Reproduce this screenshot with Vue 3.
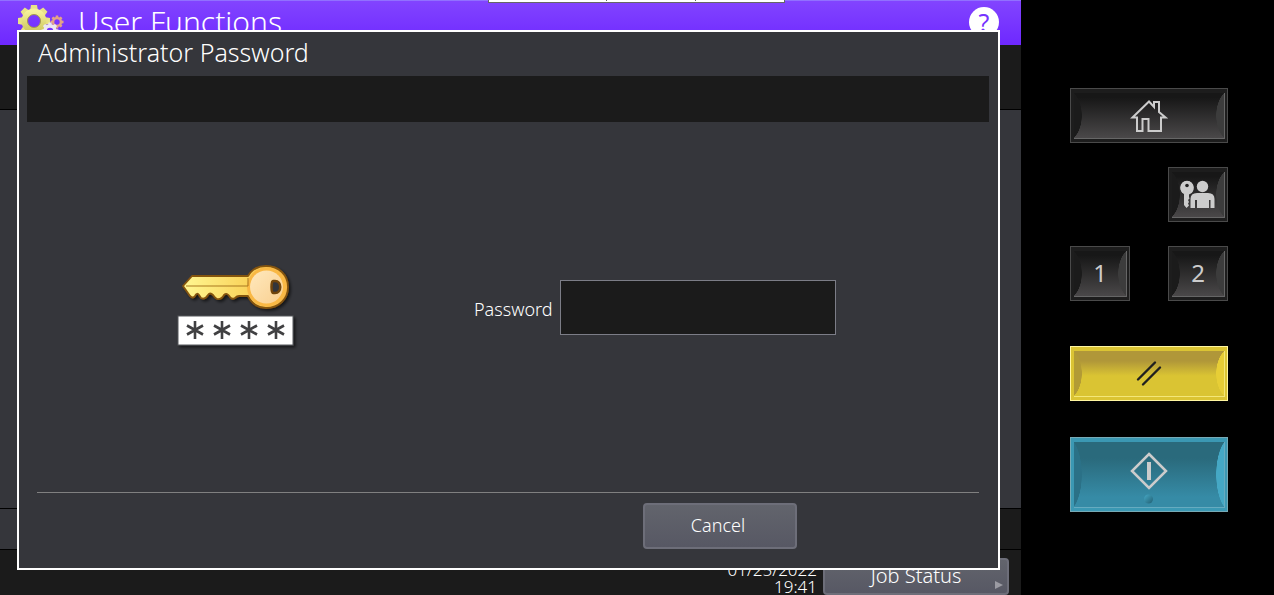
<script setup>
import { ref } from 'vue'

const password = ref('')
const toothAngles = [0, 45, 90, 135, 180, 225, 270, 315]
const stars = [22, 49, 76, 103]
</script>

<template>
  <div class="device">
    <div class="screen">
      <header class="topbar">
        <svg class="gears" viewBox="0 0 48 36" aria-hidden="true">
          <defs>
            <linearGradient id="gearFill" x1="0" y1="0" x2="0" y2="1">
              <stop offset="0" stop-color="#f6f19a" />
              <stop offset="1" stop-color="#cfca62" />
            </linearGradient>
          </defs>
          <g transform="translate(17 17)">
            <g fill="#e9e387">
              <path v-for="a in toothAngles" :key="a" :transform="`rotate(${a})`" d="M-4 -10L-3 -16H3L4 -10Z" />
            </g>
            <circle r="9.5" fill="none" stroke="url(#gearFill)" stroke-width="6" />
            <circle r="6.5" fill="none" stroke="#a39a4c" stroke-width="1" />
          </g>
          <g transform="translate(40 18)">
            <g fill="#e3a387">
              <path v-for="a in toothAngles" :key="a" :transform="`rotate(${a})`" d="M-1.5 -4L-1.2 -6.5H1.2L1.5 -4Z" />
            </g>
            <circle r="3.9" fill="none" stroke="#e3a387" stroke-width="2.4" />
          </g>
          <g transform="translate(33 27)">
            <g fill="#ece9f2">
              <path v-for="a in toothAngles" :key="a" :transform="`rotate(${a})`" d="M-2 -5L-1.5 -8.5H1.5L2 -5Z" />
            </g>
            <circle r="5" fill="none" stroke="#ece9f2" stroke-width="3.5" />
          </g>
        </svg>
        <h1>User Functions</h1>
        <button class="help" type="button" aria-label="Help">?</button>
        <div class="tab" aria-hidden="true"><i></i><i></i><i></i></div>
      </header>
      <div class="strip"></div>
      <main class="workspace"></main>
      <div class="lower"><div class="lower-panel"></div></div>
      <footer class="statusbar">
        <div class="clock">
          <div>01/25/2022</div>
          <div>19:41</div>
        </div>
        <button class="btn job" type="button">Job Status
          <svg class="arrow" viewBox="0 0 8 8" aria-hidden="true"><path d="M0 0L8 4L0 8Z" fill="#9b9ba3" /></svg>
        </button>
      </footer>

      <section class="dialog" role="dialog" aria-labelledby="dialog-title">
        <h2 id="dialog-title">Administrator Password</h2>
        <div class="message"></div>
        <form class="content" @submit.prevent>
          <svg class="key-art" viewBox="0 0 130 92" aria-hidden="true">
            <defs>
              <linearGradient id="blade" x1="0" y1="0" x2="1" y2="0">
                <stop offset="0" stop-color="#fff792" />
                <stop offset="0.6" stop-color="#fad45c" />
                <stop offset="1" stop-color="#f6b545" />
              </linearGradient>
              <linearGradient id="bow" x1="0" y1="0" x2="1" y2="1">
                <stop offset="0" stop-color="#ffe9bd" />
                <stop offset="1" stop-color="#f9cf90" />
              </linearGradient>
              <filter id="shade" x="-10%" y="-10%" width="125%" height="135%">
                <feDropShadow dx="2" dy="2" stdDeviation="1.5" flood-color="#000" flood-opacity="0.6" />
              </filter>
            </defs>
            <g filter="url(#shade)" stroke="#855411" stroke-width="1.8" stroke-linejoin="round">
              <path d="M11 25L20 15H76C80 8 86 5 94 5C107 5 116 14 116 26C116 38 107 47 94 47C86 47 80 43 76 35H67Q65 35 63 37Q60 39 58 36Q55 31 52 34Q49 39 45 38Q43 37 41 34Q38 31 36 34Q33 39 29 37L27 34Q25 31 23 35Q21 38 18 35Z" fill="url(#blade)" />
              <circle cx="94.500" cy="26" r="19.500" fill="#f9b844" stroke="none" />
              <circle cx="94.500" cy="26" r="16.500" fill="url(#bow)" stroke="none" />
              <path d="M14 25H76V17" fill="none" stroke="#a97820" stroke-width="1" />
              <path d="M101 20H103C110 20 110 32 103 32H101C99 32 99 20 101 20Z" fill="#33343a" stroke="#704509" stroke-width="2.5" />
            </g>
            <rect x="6" y="55" width="115" height="29" fill="#fff" stroke="#55565a" filter="url(#shade)" />
            <g stroke="#404042" stroke-width="2.6">
              <path v-for="x in stars" :key="x" :transform="`translate(${x + 1} 69)`" d="M0 -9V9M-8 -4.500L8 4.500M-8 4.500L8 -4.500" />
            </g>
          </svg>
          <div class="field">
            <label for="password">Password</label>
            <input id="password" v-model="password" type="password" autocomplete="off" />
          </div>
        </form>
        <div class="actions">
          <button class="btn cancel" type="button">Cancel</button>
        </div>
      </section>
    </div>

    <aside class="panel">
      <button class="key wide" type="button" aria-label="Home">
        <svg viewBox="0 0 38 34" aria-hidden="true">
          <path d="M2.500 18.500L19 2.500L24 8V3H29V13L35.500 18.500H31V32H18.500V20H12.500V32H7V18.500Z" fill="none" stroke="#ccc" stroke-width="2" />
        </svg>
      </button>
      <button class="key right" type="button" aria-label="Login">
        <svg viewBox="0 0 38 34" aria-hidden="true">
          <g fill="#ccc">
            <path fill-rule="evenodd" d="M8 3A7 7 0 0 0 5 16V27L7.500 30L10 27.500L9 25.500L10 24L9 22L10.500 20.500L10 19V16.500A7 7 0 0 0 8 3ZM7.500 5.800A2 2 0 1 1 7.400 5.800Z" />
            <circle cx="8" cy="9.500" r="6.700" />
            <circle cx="23.500" cy="8.500" r="5.700" />
            <path d="M18 15H29Q35.500 15 35.500 21V30H31.500V22H30V30H18V22H16V30H11.500V21Q11.500 15 18 15Z" />
          </g>
          <circle cx="8" cy="7.500" r="1.800" fill="#222" />
        </svg>
      </button>
      <button class="key one" type="button"><span>1</span></button>
      <button class="key two" type="button"><span>2</span></button>
      <button class="key wide reset" type="button" aria-label="Reset">
        <svg viewBox="0 0 38 34" aria-hidden="true">
          <path d="M8 22.500L25 5.500M13 27.500L30 10.500" stroke="#202020" stroke-width="2.4" stroke-linecap="round" />
        </svg>
      </button>
      <button class="key wide start" type="button" aria-label="Start">
        <svg viewBox="0 0 38 54" aria-hidden="true">
          <defs>
            <linearGradient id="lamp" x1="0" y1="0" x2="1" y2="1">
              <stop offset="0" stop-color="#46a9c6" />
              <stop offset="1" stop-color="#225f72" />
            </linearGradient>
          </defs>
          <path d="M19 2L36 19L19 36L2 19Z" fill="none" stroke="#ccc" stroke-width="2.5" />
          <path d="M19 10V28" stroke="#ccc" stroke-width="4" />
          <circle cx="18.500" cy="47" r="4.500" fill="url(#lamp)" />
        </svg>
      </button>
    </aside>
  </div>
</template>

<style>
body {
  background: #000;
}
</style>

<style scoped>
* {
  box-sizing: border-box;
}
.device {
  display: grid;
  grid-template-columns: minmax(0, 1fr) 253px;
  min-height: 100vh;
  background: #000;
  color: #fff;
  font-family: "Noto Sans", "Open Sans", sans-serif;
  font-weight: 300;
}
button,
input {
  font: inherit;
  color: inherit;
  margin: 0;
}
h1,
h2 {
  margin: 0;
  font-weight: 300;
}
.screen {
  position: relative;
  display: flex;
  flex-direction: column;
  background: #1b1b1b;
  overflow: hidden;
}
.topbar {
  position: relative;
  display: flex;
  align-items: center;
  height: 45px;
  padding: 0 22px 2px 17px;
  border-top: 1px solid #9170ff;
  background: linear-gradient(#8244ff, #6e28ff);
}
.gears {
  width: 48px;
  height: 36px;
}
.topbar h1 {
  flex: 1;
  margin-left: 13px;
  font-size: 30px;
  line-height: 40px;
}
.help {
  width: 30px;
  height: 30px;
  padding: 0;
  border: 0;
  border-radius: 50%;
  background: #fff;
  color: #7634ff;
  font-size: 25px;
  font-weight: 400;
  line-height: 28px;
}
.tab {
  position: absolute;
  top: -1px;
  left: 488px;
  display: grid;
  grid-template-columns: 117px 89px 89px;
  width: 297px;
  height: 3px;
  border: 1px solid #666;
  border-top: 0;
  background: #fff;
}
.tab i + i {
  height: 1px;
  border-left: 1px solid #666;
}
.strip {
  height: 64px;
}
.workspace {
  flex: 1;
  border-top: 1px solid #000;
  background: #35363b;
}
.lower {
  height: 41px;
  padding-right: 40px;
  border-top: 1px solid #000;
}
.lower-panel {
  height: 40px;
  background: #35363b;
}
.statusbar {
  display: flex;
  justify-content: flex-end;
  align-items: flex-end;
  gap: 6px;
  height: 46px;
  padding-right: 12px;
  border-top: 1px solid #000;
}
.clock {
  text-align: right;
  font-size: 17px;
  line-height: 17px;
}
.btn {
  position: relative;
  padding: 0;
  border: 2px solid #6d6e79;
  border-radius: 4px;
  background: linear-gradient(#62646c, #575864);
  font-size: 18px;
}
.job {
  width: 186px;
  height: 37px;
  padding-bottom: 2px;
  font-size: 20px;
  line-height: 28px;
}
.arrow {
  position: absolute;
  right: 4px;
  bottom: 4px;
  width: 8px;
  height: 8px;
}
.dialog {
  position: absolute;
  inset: 30px 21px 25px 17px;
  display: flex;
  flex-direction: column;
  border: 2px solid #fff;
  background: #35363b;
}
.dialog h2 {
  height: 44px;
  padding-left: 19px;
  font-size: 25px;
  line-height: 41px;
}
.message {
  height: 46px;
  margin: 0 9px 0 8px;
  background: #1b1b1b;
}
.content {
  flex: 1;
  display: grid;
  grid-template-columns: 455fr 524fr;
  align-items: center;
}
.key-art {
  justify-self: center;
  width: 130px;
  height: 92px;
  margin-right: 20px;
}
.field {
  display: flex;
  align-items: center;
}
.field label {
  width: 86px;
  padding-top: 4px;
  font-size: 18px;
}
.field input {
  width: 276px;
  height: 55px;
  padding: 0 12px;
  border: 1px solid #7c7d87;
  border-radius: 0;
  background: #1b1b1b;
  outline: 0;
}
.actions {
  display: flex;
  justify-content: flex-end;
  margin: 0 19px 0 18px;
  padding: 10px 182px 19px 0;
  border-top: 1px solid #808080;
}
.cancel {
  width: 154px;
  height: 46px;
  padding: 0 4px 2px 0;
}
.panel {
  display: grid;
  grid-template-columns: 60px 60px;
  grid-template-rows: 55px 55px 55px 76px 87px;
  justify-content: space-between;
  align-content: start;
  align-items: end;
  row-gap: 24px;
  padding: 88px 46px 0 49px;
}
.key {
  --frame: #1d1d1d;
  --edge: #4a4a4a;
  --rim: #666;
  --left: #1b1b1b;
  --right: #3c3c3c;
  --face: linear-gradient(#171717 10%, #4a4849);
  position: relative;
  display: grid;
  place-items: center;
  height: 55px;
  padding: 0;
  border: 1px solid var(--edge);
  background: var(--frame);
  color: #ccc;
  font-size: 24px;
  font-weight: 400;
}
.key::before,
.key::after {
  content: "";
  position: absolute;
  inset: 4px 2px 3px 3px;
}
.key::before {
  border-right: 1px solid var(--rim);
  border-bottom: 1px solid var(--rim);
  background: var(--face);
}
.key::after {
  bottom: 4px;
  right: 3px;
  background:
    radial-gradient(16px 58% at -8px 50%, var(--left) 97%, transparent),
    radial-gradient(16px 58% at calc(100% + 8px) 50%, var(--right) 97%, transparent);
}
.key svg,
.key span {
  position: relative;
  z-index: 1;
}
.key span {
  padding-bottom: 3px;
}
.key svg {
  width: 38px;
  height: 34px;
}
.wide {
  grid-column: 1 / 3;
}
.right {
  grid-column: 2;
}
.reset {
  --frame: #dbc433;
  --edge: #fff6a0;
  --rim: #f4e778;
  --left: #b29b35;
  --right: #e7ce36;
  --face: linear-gradient(#b09739 22%, #dac433 55%);
}
.start {
  --frame: #3b98b3;
  --edge: #77aab6;
  --rim: #66abc0;
  --left: #2b7187;
  --right: #45a8c5;
  --face: linear-gradient(#2a6a7c 25%, #368ba6 85%);
  height: 75px;
}
.start svg {
  height: 54px;
  margin-top: 8px;
}
</style>
